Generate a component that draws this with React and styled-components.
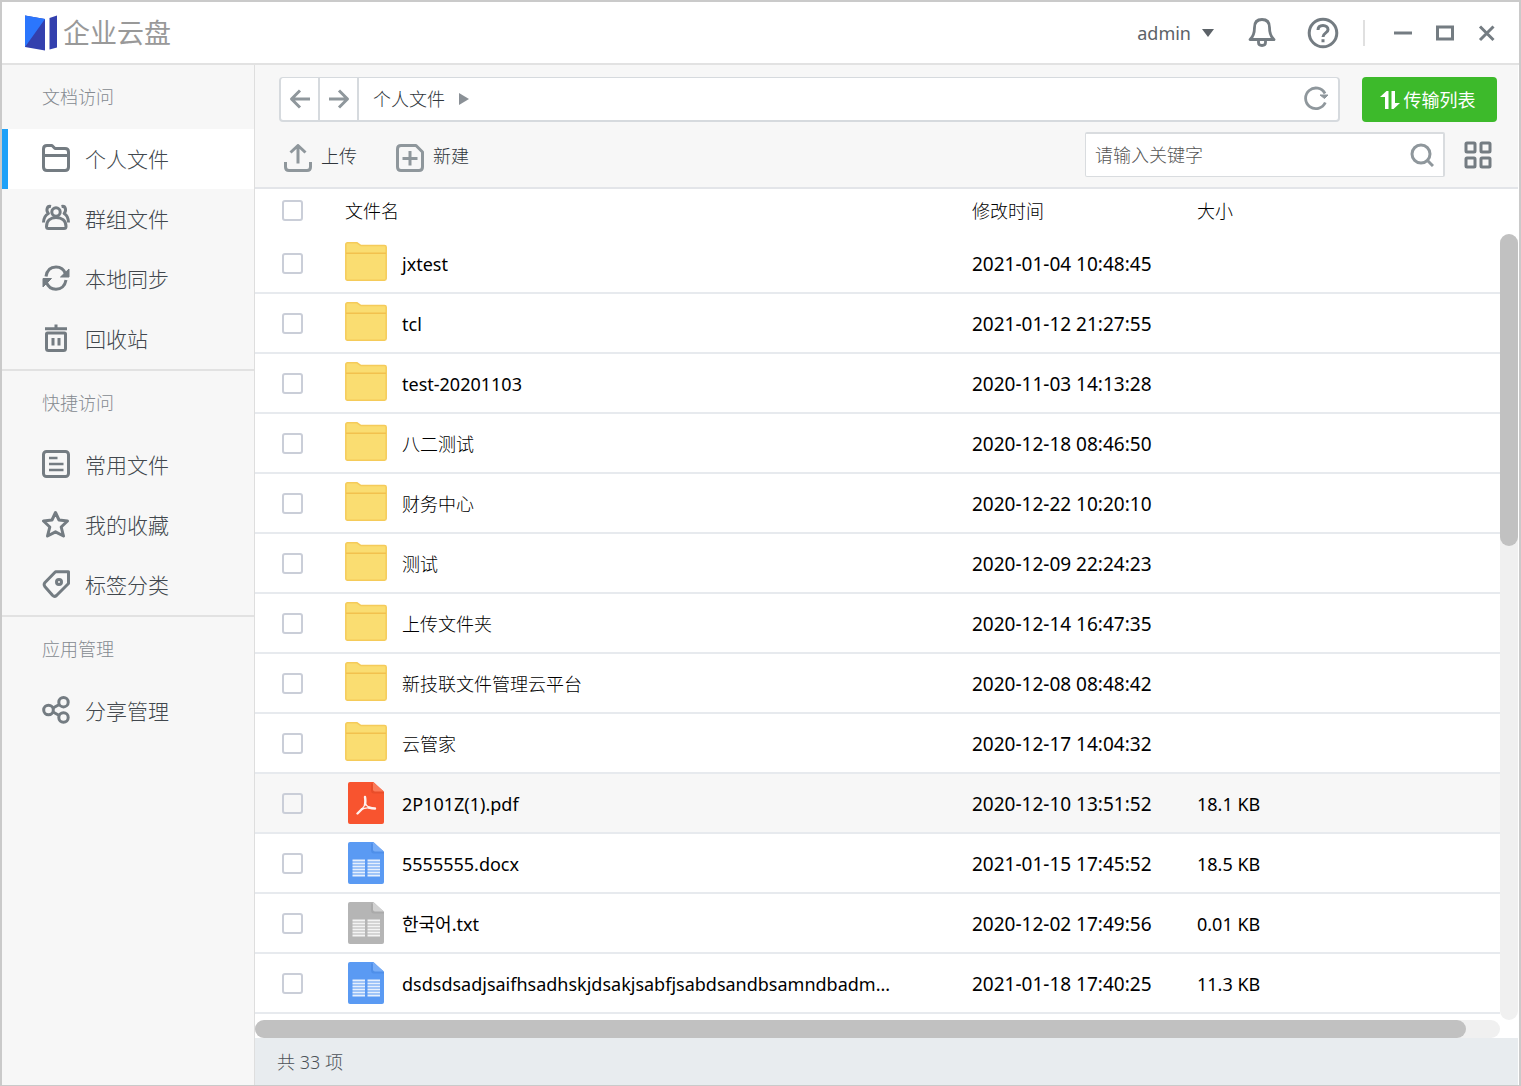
import React from "react";
import styled, { createGlobalStyle, css } from "styled-components";

const GlobalStyle = createGlobalStyle`
  * { box-sizing: border-box; }
  body {
    margin: 0;
    font-family: "Noto Sans", "Noto Sans CJK SC", "Noto Sans CJK KR", sans-serif;
    font-size: 18px;
    line-height: 24px;
    color: #000;
  }
  button, input { font: inherit; color: inherit; }
  button { margin: 0; padding: 0; border: 0; background: none; cursor: pointer; }
  svg { display: block; flex: none; }
`;

const Window = styled.div`
  display: flex;
  flex-direction: column;
  height: 100vh;
  border: 2px solid #cacaca;
  border-bottom-width: 1px;
  background: #fff;
  overflow: hidden;
`;

const Header = styled.header`
  display: flex;
  align-items: center;
  justify-content: space-between;
  flex: none;
  height: 63px;
  padding: 0 22px 0 23px;
  border-bottom: 2px solid #e2e2e2;
`;

const Brand = styled.div`
  display: flex;
  align-items: center;
  gap: 6px;
`;

const BrandName = styled.h1`
  margin: 0;
  font-size: 27px;
  line-height: 36px;
  font-weight: 400;
  color: #999;
`;

const HeaderActions = styled.div`
  display: flex;
  align-items: center;
  gap: 31px;
  color: #747c82;
`;

const AccountButton = styled.button`
  display: flex;
  align-items: center;
  gap: 10px;
  color: #5c6268;
`;

const IconButton = styled.button`
  display: flex;
  align-items: center;
  justify-content: center;
  color: ${(p) => p.$color || "inherit"};
`;

const HelpGroup = styled.div`
  display: flex;
  align-items: center;
  gap: 24px;
`;

const WindowControls = styled.div`
  display: flex;
  align-items: center;
  gap: 22px;
  height: 26px;
  padding-left: 28px;
  border-left: 2px solid #e0e0e0;
`;

const Body = styled.div`
  display: flex;
  flex: 1;
  min-height: 0;
`;

const Sidebar = styled.nav`
  flex: none;
  width: 253px;
  background: #f7f7f7;
  border-right: 1px solid #dedede;
`;

const Section = styled.section`
  & + & { border-top: 2px solid #e2e2e2; }
`;

const SectionTitle = styled.h2`
  display: flex;
  align-items: center;
  height: 64px;
  margin: 0;
  padding-left: 40px;
  font-size: 18px;
  font-weight: 300;
  color: #858a90;
`;

const NavLink = styled.a`
  display: flex;
  align-items: center;
  gap: 15px;
  height: 60px;
  padding-left: 34px;
  border-left: 6px solid transparent;
  font-size: 21px;
  font-weight: 300;
  color: #41474d;
  text-decoration: none;
  svg { margin-bottom: 2px; color: #747c82; }
  ${(p) => p.$active && css`
    border-left-color: #1ea1f8;
    background: #fff;
  `}
`;

const Main = styled.main`
  display: flex;
  flex-direction: column;
  flex: 1;
  min-width: 0;
  padding-right: 1px;
`;

const Toolbar = styled.div`
  display: flex;
  flex-direction: column;
  flex: none;
  gap: 10px;
  padding: 12px 21px 10px 24px;
  background: #f7f7f7;
  border-bottom: 2px solid #e3e5e9;
`;

const PathRow = styled.div`
  display: flex;
  gap: 22px;
  height: 45px;
`;

const PathBar = styled.div`
  display: flex;
  flex: 1;
  align-items: stretch;
  padding-right: 9px;
  border: 2px solid #d6dade;
  border-top-width: 1px;
  border-radius: 4px;
  background: #fff;
  color: #8f979c;
`;

const HistoryButton = styled(IconButton)`
  width: 39px;
  border-right: 2px solid #d6dade;
`;

const Crumb = styled.a`
  display: flex;
  align-items: center;
  flex: 1;
  gap: 14px;
  padding-left: 14px;
  font-weight: 300;
  color: #30363c;
  text-decoration: none;
`;

const TransferButton = styled.button`
  display: flex;
  align-items: center;
  justify-content: center;
  gap: 4px;
  width: 135px;
  padding-right: 4px;
  border-radius: 4px;
  background: #3dba2b;
  color: #fff;
`;

const ToolRow = styled.div`
  display: flex;
  align-items: center;
  height: 45px;
  padding: 0 5px;
`;

const ToolButtons = styled.div`
  display: flex;
  flex: 1;
  gap: 39px;
`;

const ToolButton = styled.button`
  display: flex;
  align-items: center;
  gap: 9px;
  padding-top: 2px;
  font-weight: 300;
  color: #30363c;
  svg { margin-top: 4px; color: #8f979c; }
`;

const SearchBox = styled.form`
  display: flex;
  align-items: center;
  width: 360px;
  height: 45px;
  margin-right: 19px;
  padding: 0 9px;
  border: 2px solid #d9dcdf;
  border-bottom-width: 1px;
  border-left-width: 1px;
  border-radius: 2px;
  background: #fff;
  color: #8f979c;
`;

const SearchInput = styled.input`
  flex: 1;
  min-width: 0;
  padding: 0;
  border: 0;
  outline: 0;
  background: transparent;
  font-weight: 300;
  color: #333;
  &::placeholder { color: #555; opacity: 1; }
`;

const ListArea = styled.div`
  display: flex;
  flex: 1;
  min-height: 0;
  overflow: hidden;
`;

const FileTable = styled.table`
  flex: 1;
  align-self: flex-start;
  width: 100%;
  border-spacing: 0;
  table-layout: fixed;
  font-weight: 400;
`;

const HeadCell = styled.th`
  height: 45px;
  padding: 0 0 2px;
  text-align: left;
  font-weight: 300;
`;

const Cell = styled.td`
  height: 60px;
  padding: 0;
  border-bottom: 2px solid #e7eaee;
  white-space: nowrap;
`;

const TextCell = styled(Cell)`
  padding-top: 2px;
  font-size: ${(p) => p.$size || "18px"};
`;

const Row = styled.tr`
  background: ${(p) => (p.$highlight ? "#f7f7f7" : "#fff")};
`;

const Col = styled.col`
  width: ${(p) => p.$width};
`;

const CheckBox = styled.input`
  display: block;
  appearance: none;
  width: 21px;
  height: 21px;
  margin: 0 0 0 27px;
  border: 2px solid #caced8;
  border-radius: 3px;
`;

const FileEntry = styled.div`
  display: flex;
  align-items: center;
  gap: 15px;
`;

const FileName = styled.span`
  padding-top: 2px;
  font-weight: ${(p) => (p.$thin ? 300 : 400)};
`;

const VerticalTrack = styled.div`
  flex: none;
  width: 18px;
  margin-top: 45px;
  border-radius: 9px;
  background: #f0f0f0;
`;

const VerticalThumb = styled.div`
  height: 39.7%;
  border-radius: 9px;
  background: #c1c1c1;
`;

const HorizontalTrack = styled.div`
  flex: none;
  height: 18px;
  margin-right: 18px;
  border-radius: 9px;
  background: #f0f0f0;
`;

const HorizontalThumb = styled.div`
  width: 97.3%;
  height: 18px;
  border-radius: 9px;
  background: #c1c1c1;
`;

const Footer = styled.footer`
  display: flex;
  align-items: center;
  flex: none;
  height: 47px;
  padding-left: 22px;
  background: #e8ecef;
  font-weight: 300;
  color: #4c5258;
`;

const Icon = ({ w = 28, h = w, sw = 3, children }) => (
  <svg width={w} height={h} viewBox={`0 0 ${w} ${h}`} fill="none" stroke="currentColor" strokeWidth={sw} strokeLinejoin="round" aria-hidden="true">
    {children}
  </svg>
);

const Logo = () => (
  <svg width="32" height="36" viewBox="0 0 32 36" aria-hidden="true">
    <path d="M0 .5L20 4V35.500L0 32Z" fill="#3340ae" />
    <path d="M0 .5L20 4L0 32Z" fill="#2b76fd" />
    <path d="M24.500 3L32 .5V32.500L24.500 34.500Z" fill="#3340ae" />
  </svg>
);

const FolderIcon = () => (
  <Icon>
    <path d="M1.500 5Q1.500 1.500 5 1.500H10L13 4.500H23Q26.500 4.500 26.500 8V23Q26.500 26.500 23 26.500H5Q1.500 26.500 1.500 23ZM1.500 11.500H26.500" />
  </Icon>
);

const GroupIcon = () => (
  <Icon sw={3}>
    <circle cx="14" cy="8" r="4.200" />
    <path d="M4.500 22.500C4.500 16.500 8.500 13.500 14 13.500S24 16.500 24 22.500Q24 24.500 22 24.500H6.500Q4.500 24.500 4.500 22.500Z" />
    <path d="M9 2.500C4.500 1.500 4 7 6.400 9.500C3.500 11 1.700 14 1.500 18.500M19.500 2.500C24 1.500 24.500 7 22.100 9.500C25 11 26.300 14 26.500 18.500" />
  </Icon>
);

const SyncIcon = () => (
  <Icon>
    <path d="M4 12.500C5 6 9 3 14 3C18.500 3 22 5.500 23.500 10M24 16C23 22 19 25.200 14 25.200C9.500 25.200 6 22.700 4.500 18.500" />
    <path d="M27 5V13H18.500ZM1 23V14.500H9.500Z" fill="currentColor" stroke="currentColor" strokeWidth="1" />
  </Icon>
);

const TrashIcon = () => (
  <Icon>
    <path d="M3 4.800H25M14 .5V5M4.500 10Q4.500 9 5.500 9H22.500Q23.500 9 23.500 10V24.500Q23.500 26.500 21.500 26.500H6.500Q4.500 26.500 4.500 24.500ZM11 14V21.500M17 14V21.500" />
  </Icon>
);

const DocIcon = () => (
  <Icon>
    <rect x="1.500" y="1.500" width="25" height="25" rx="3" />
    <path d="M7 8H15.500M7 14H21.500M7 20H21.500" strokeWidth="2.600" />
  </Icon>
);

const StarIcon = () => (
  <Icon>
    <path d="M13.500 2.500L17 10L25.500 11L19.200 17L21.500 26L13.500 21.800L5.500 26L7.800 17L1.500 11L10 10Z" />
  </Icon>
);

const TagIcon = () => (
  <Icon>
    <path d="M13.500 1.800H26.500V13.500L14.500 25.500Q12.500 27.200 10.700 25.500L2.800 16.500Q1.400 14.500 3 12.500Z" />
    <circle cx="17" cy="12" r="2.500" />
  </Icon>
);

const ShareIcon = () => (
  <Icon>
    <circle cx="6.500" cy="14" r="4.800" />
    <circle cx="21.500" cy="6.200" r="4.700" />
    <circle cx="21.500" cy="21.500" r="4.700" />
    <path d="M11 12L17.300 8.500M11 16L17.300 19.500" />
  </Icon>
);

const FolderArt = () => (
  <svg width="42" height="42" viewBox="0 0 42 42" aria-hidden="true">
    <path d="M.8 2.500Q.8.800 2.500.8H12L16 3.500H39.500Q41.200 3.500 41.200 5V36.500Q41.200 38.200 39.500 38.200H2.500Q.8 38.200.8 36.500Z" fill="#fadd71" stroke="#f5cb5a" strokeWidth="1.500" />
    <path d="M1 11.300H41" stroke="#f2c14e" strokeWidth="1.500" />
  </svg>
);

const fileColors = {
  pdf: ["#f8542f", "#fb7a59", "#d94524"],
  doc: ["#5a9af3", "#78adf7", "#4384e0"],
  txt: ["#b5b5b5", "#d2d2d2", "#a0a0a0"],
};

const FileArt = ({ kind }) => {
  const [base, fold, shade] = fileColors[kind];
  return (
    <svg width="42" height="42" viewBox="0 0 42 42" aria-hidden="true">
      <path d="M5 0H28.500L39 10V40Q39 42 37 42H5Q3 42 3 40V2Q3 0 5 0Z" fill={base} />
      <path d="M26 1V8Q26 11.500 29 11.500H39V9.500Z" fill={shade} opacity=".5" />
      <path d="M28 0L39 9.500H30Q28 9.500 28 7.500Z" fill={fold} />
      {kind === "pdf" ? (
        <g fill="none" stroke="#fff" strokeLinecap="round" strokeLinejoin="round" opacity=".92">
          <path d="M20 15C20.500 18 20.500 20 20 22.500M12.500 31.500C14 30 15.500 28.500 17 27M24 25.500C26 26.200 28 26.500 30 26.500" strokeWidth="2.400" />
          <path d="M20 21C20 23.500 18.500 25.500 16.500 27.500C19 26 21.500 25.500 25 26C23 25 21 23.500 20 21Z" strokeWidth="1.200" />
        </g>
      ) : (
        <path d="M7.500 18.500H20M7.500 21.500H20M7.500 24.500H20M7.500 27.500H20M7.500 30.500H20M7.500 33.500H20M22.500 18.500H35M22.500 21.500H35M22.500 24.500H35M22.500 27.500H35M22.500 30.500H35M22.500 33.500H35" stroke="#fff" strokeWidth="1.800" opacity=".85" />
      )}
    </svg>
  );
};

const sections = [
  {
    title: "文档访问",
    items: [
      ["个人文件", FolderIcon],
      ["群组文件", GroupIcon],
      ["本地同步", SyncIcon],
      ["回收站", TrashIcon],
    ],
  },
  {
    title: "快捷访问",
    items: [
      ["常用文件", DocIcon],
      ["我的收藏", StarIcon],
      ["标签分类", TagIcon],
    ],
  },
  { title: "应用管理", items: [["分享管理", ShareIcon]] },
];

const files = [
  ["folder", "jxtest", "2021-01-04 10:48:45", ""],
  ["folder", "tcl", "2021-01-12 21:27:55", ""],
  ["folder", "test-20201103", "2020-11-03 14:13:28", ""],
  ["folder", "八二测试", "2020-12-18 08:46:50", ""],
  ["folder", "财务中心", "2020-12-22 10:20:10", ""],
  ["folder", "测试", "2020-12-09 22:24:23", ""],
  ["folder", "上传文件夹", "2020-12-14 16:47:35", ""],
  ["folder", "新技联文件管理云平台", "2020-12-08 08:48:42", ""],
  ["folder", "云管家", "2020-12-17 14:04:32", ""],
  ["pdf", "2P101Z(1).pdf", "2020-12-10 13:51:52", "18.1 KB"],
  ["doc", "5555555.docx", "2021-01-15 17:45:52", "18.5 KB"],
  ["txt", "한국어.txt", "2020-12-02 17:49:56", "0.01 KB"],
  ["doc", "dsdsdsadjsaifhsadhskjdsakjsabfjsabdsandbsamndbadm...", "2021-01-18 17:40:25", "11.3 KB"],
];

const isChinese = (text) => /[\u4e00-\u9fff]/.test(text);

export default function App() {
  return (
    <Window>
      <GlobalStyle />
      <Header>
        <Brand>
          <Logo />
          <BrandName>企业云盘</BrandName>
        </Brand>
        <HeaderActions>
          <AccountButton type="button">
            admin
            <Icon w={16} sw={0}>
              <path d="M1 4H13L7 12Z" fill="#5c6268" />
            </Icon>
          </AccountButton>
          <IconButton type="button" aria-label="通知">
            <Icon w={28} h={32} sw={2.8}>
              <path d="M2 22.500C5 20 6.500 17.500 6.500 10.500C6.500 5.500 9 2.500 14 2.500S21.500 5.500 21.500 10.500C21.500 17.500 23 20 26 22.500Z" />
              <path d="M10.500 23V25.500Q10.500 28.500 14 28.500T17.500 25.500V23" />
            </Icon>
          </IconButton>
          <HelpGroup>
            <IconButton type="button" aria-label="帮助">
              <Icon w={32}>
                <circle cx="16" cy="16" r="13.800" />
                <path d="M11 13C11 10 13 8.500 16 8.500S21 10.200 21 12.700C21 16 16 15.800 16 20M16 22.300V25.300" />
              </Icon>
            </IconButton>
            <WindowControls>
              <IconButton type="button" aria-label="最小化">
                <Icon w={20}><path d="M1 10H19" /></Icon>
              </IconButton>
              <IconButton type="button" aria-label="最大化">
                <Icon w={20}><path d="M2.500 4H17.500V16H2.500Z" strokeLinejoin="miter" /></Icon>
              </IconButton>
              <IconButton type="button" aria-label="关闭">
                <Icon w={20}><path d="M3 3.500L16.500 17M16.500 3.500L3 17" /></Icon>
              </IconButton>
            </WindowControls>
          </HelpGroup>
        </HeaderActions>
      </Header>
      <Body>
        <Sidebar>
          {sections.map((s, si) => (
            <Section key={s.title}>
              <SectionTitle>{s.title}</SectionTitle>
              {s.items.map(([label, Glyph], i) => (
                <NavLink key={label} href="#" $active={si === 0 && i === 0}>
                  <Glyph />
                  {label}
                </NavLink>
              ))}
            </Section>
          ))}
        </Sidebar>
        <Main>
          <Toolbar>
            <PathRow>
              <PathBar>
                <HistoryButton type="button" aria-label="后退">
                  <Icon w={22}><path d="M21 11H3M11 2.500L2.500 11L11 19.500" /></Icon>
                </HistoryButton>
                <HistoryButton type="button" aria-label="前进">
                  <Icon w={22}><path d="M1 11H19M11 2.500L19.500 11L11 19.500" /></Icon>
                </HistoryButton>
                <Crumb href="#">
                  个人文件
                  <Icon w={10} h={12} sw={0}><path d="M0 0L10 6L0 12Z" fill="#8a9096" /></Icon>
                </Crumb>
                <IconButton type="button" aria-label="刷新">
                  <Icon w={26} sw={2.8}>
                    <path d="M22 7.500A10.300 10.300 0 1 0 22.300 16.500" />
                    <path d="M17 9H25L21.500 12.500Z" fill="currentColor" strokeWidth="1" />
                  </Icon>
                </IconButton>
              </PathBar>
              <TransferButton type="button">
                <Icon w={20} sw={0}>
                  <path d="M0 7L6.500 1H8.500V19H5V7ZM11.500 1H15V13H20L13.500 19H11.500Z" fill="#fff" />
                </Icon>
                传输列表
              </TransferButton>
            </PathRow>
            <ToolRow>
              <ToolButtons>
                <ToolButton type="button">
                  <Icon><path d="M1.500 18V23Q1.500 26.500 5 26.500H23Q26.500 26.500 26.500 23V18M14 19.500V2M6.500 8.500L14 1.500L21.500 8.500" /></Icon>
                  上传
                </ToolButton>
                <ToolButton type="button">
                  <Icon><path d="M5 1.500H20L26.500 8V23Q26.500 26.500 23 26.500H5Q1.500 26.500 1.500 23V5Q1.500 1.500 5 1.500ZM14 7V21.500M6.500 14.500H21.500" /></Icon>
                  新建
                </ToolButton>
              </ToolButtons>
              <SearchBox onSubmit={(e) => e.preventDefault()}>
                <SearchInput type="text" aria-label="搜索" placeholder="请输入关键字" />
                <IconButton type="submit" aria-label="搜索">
                  <Icon w={24}>
                    <circle cx="11" cy="11" r="9" />
                    <path d="M17.500 17.500L23 23" />
                  </Icon>
                </IconButton>
              </SearchBox>
              <IconButton type="button" aria-label="网格视图" $color="#747c82">
                <Icon>
                  <rect x="2" y="2" width="9" height="9" rx="1" />
                  <rect x="17" y="2" width="9" height="9" rx="1" />
                  <rect x="2" y="17" width="9" height="9" rx="1" />
                  <rect x="17" y="17" width="9" height="9" rx="1" />
                </Icon>
              </IconButton>
            </ToolRow>
          </Toolbar>
          <ListArea>
            <FileTable>
              <colgroup>
                <Col $width="90px" />
                <Col $width="auto" />
                <Col $width="225px" />
                <Col $width="303px" />
              </colgroup>
              <thead>
                <tr>
                  <HeadCell><CheckBox type="checkbox" aria-label="全选" /></HeadCell>
                  <HeadCell>文件名</HeadCell>
                  <HeadCell>修改时间</HeadCell>
                  <HeadCell>大小</HeadCell>
                </tr>
              </thead>
              <tbody>
                {files.map(([kind, name, date, size]) => (
                  <Row key={name} $highlight={kind === "pdf"}>
                    <Cell><CheckBox type="checkbox" aria-label={name} /></Cell>
                    <Cell>
                      <FileEntry>
                        {kind === "folder" ? <FolderArt /> : <FileArt kind={kind} />}
                        <FileName $thin={isChinese(name)}>{name}</FileName>
                      </FileEntry>
                    </Cell>
                    <TextCell $size="19px">{date}</TextCell>
                    <TextCell>{size}</TextCell>
                  </Row>
                ))}
              </tbody>
            </FileTable>
            <VerticalTrack><VerticalThumb /></VerticalTrack>
          </ListArea>
          <HorizontalTrack><HorizontalThumb /></HorizontalTrack>
          <Footer>共 33 项</Footer>
        </Main>
      </Body>
    </Window>
  );
}
